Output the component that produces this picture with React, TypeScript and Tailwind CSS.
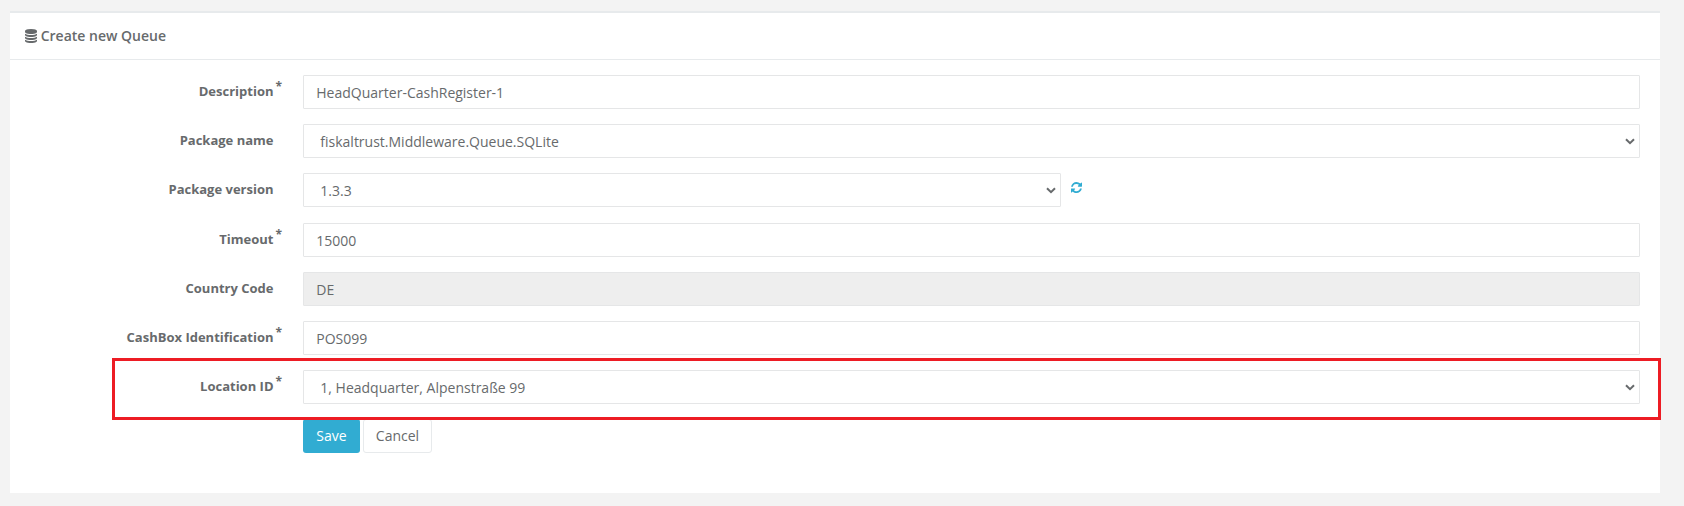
import type { ReactNode } from "react";

const controlClass =
  "block h-[34px] w-full rounded-[1px] border border-[#e5e6e7] text-[14px] leading-[20px] text-[#676a6c] outline-none";

function DatabaseIcon() {
  return (
    <svg viewBox="0 0 1536 1792" className="h-[14px] w-[12px] fill-current" aria-hidden="true">
      <path d="M768 768q237 0 443-43t325-127v170q0 69-103 128t-280 93.5-385 34.5-385-34.5-280-93.5-103-128v-170q119 84 325 127t443 43zm0 768q237 0 443-43t325-127v170q0 69-103 128t-280 93.5-385 34.5-385-34.5-280-93.5-103-128v-170q119 84 325 127t443 43zm0-384q237 0 443-43t325-127v170q0 69-103 128t-280 93.5-385 34.5-385-34.5-280-93.5-103-128v-170q119 84 325 127t443 43zm0-1152q208 0 385 34.5t280 93.5 103 128v128q0 69-103 128t-280 93.5-385 34.5-385-34.5-280-93.5-103-128v-128q0-69 103-128t280-93.5 385-34.5z" />
    </svg>
  );
}

function RefreshIcon() {
  return (
    <svg viewBox="0 0 1536 1664" className="h-[12px] w-[11px] fill-current" aria-hidden="true">
      <path d="M1511 928q0 5-1 7-64 268-268 434.5t-478 166.5q-146 0-282.5-55t-243.5-157l-129 129q-19 19-45 19t-45-19-19-45v-448q0-26 19-45t45-19h448q26 0 45 19t19 45-19 45l-137 137q71 66 161 102t187 36q134 0 250-65t186-179q11-17 53-117 8-23 30-23h192q13 0 22.5 9.5t9.5 22.5zm25-800v448q0 26-19 45t-45 19h-448q-26 0-45-19t-19-45 19-45l138-138q-148-137-349-137-134 0-250 65t-186 179q-11 17-53 117-8 23-30 23h-199q-13 0-22.5-9.5t-9.5-22.5v-7q65-268 270-434.5t480-166.5q146 0 284 55.5t245 156.5l130-129q19-19 45-19t45 19 19 45z" />
    </svg>
  );
}

function Row({ label, required, children }: { label: string; required?: boolean; children: ReactNode }) {
  return (
    <div className="flex">
      <label className="flex w-[293px] shrink-0 justify-end pt-[7px] text-[13px] leading-[19px] font-bold">
        <span>{label}</span>
        <span className="-mt-[3px] w-[29.5px] pl-[2px] text-[12px] leading-[16px] font-bold">{required ? "*" : ""}</span>
      </label>
      {children}
    </div>
  );
}

function TextField({ value, disabled }: { value: string; disabled?: boolean }) {
  return (
    <input
      className={`${controlClass} py-[6px] pr-3 pl-[12.3px] ${disabled ? "bg-[#eeeeee]" : "bg-white"}`}
      defaultValue={value}
      readOnly={disabled}
    />
  );
}

function SelectField({ value }: { value: string }) {
  return (
    <div className="relative w-full">
      <select className={`${controlClass} appearance-none bg-white pt-[7px] pr-6 pb-[5px] pl-[16.3px]`} defaultValue={value}>
        <option>{value}</option>
      </select>
      <svg
        viewBox="0 0 10 7"
        className="pointer-events-none absolute top-[14px] right-[5px] h-[7px] w-[10px] fill-none stroke-current stroke-2"
        aria-hidden="true"
      >
        <path d="M1 1.2 5 5.2 9 1.2" />
      </svg>
    </div>
  );
}

export default function App() {
  return (
    <div className="h-[506px] bg-[#f3f3f3] pt-[11px] pr-[24px] pl-[10px] font-['Open_Sans',sans-serif] text-[#676a6c]">
      <section className="relative h-[482px] border-t-2 border-[#e7eaec] bg-white">
        <header className="flex h-[47px] gap-[3.7px] border-b border-[#e7eaec] pt-[13px] pl-[15px]">
          <div className="pt-[3px]">
            <DatabaseIcon />
          </div>
          <h5 className="text-[14px] leading-[20px] font-semibold">Create new Queue</h5>
        </header>
        <form className="flex flex-col gap-[15px] pt-[15px] pr-[20px]" onSubmit={(e) => e.preventDefault()}>
          <Row label="Description" required>
            <TextField value="HeadQuarter-CashRegister-1" />
          </Row>
          <Row label="Package name">
            <SelectField value="fiskaltrust.Middleware.Queue.SQLite" />
          </Row>
          <div className="pb-px">
            <Row label="Package version">
              <div className="w-[758px]">
                <SelectField value="1.3.3" />
              </div>
              <button type="button" className="flex h-[34px] items-start pt-[9px] pl-[10.4px] text-[#31acd2]" aria-label="Refresh">
                <RefreshIcon />
              </button>
            </Row>
          </div>
          <Row label="Timeout" required>
            <TextField value="15000" />
          </Row>
          <Row label="Country Code">
            <TextField value="DE" disabled />
          </Row>
          <Row label="CashBox Identification" required>
            <TextField value="POS099" />
          </Row>
          <Row label="Location ID" required>
            <SelectField value="1, Headquarter, Alpenstraße 99" />
          </Row>
          <div className="flex gap-[3px] pl-[293px] text-[14px] leading-[20px]">
            <button type="submit" className="h-[34px] w-[57px] rounded-[3px] bg-[#31acd2] text-white">
              Save
            </button>
            <button type="button" className="h-[34px] w-[69px] rounded-[3px] border border-[#e7eaec] bg-white">
              Cancel
            </button>
          </div>
        </form>
        <div className="pointer-events-none absolute top-[345px] -right-px left-[102px] h-[62px] border-[3px] border-[#ed1c24]" />
      </section>
    </div>
  );
}
